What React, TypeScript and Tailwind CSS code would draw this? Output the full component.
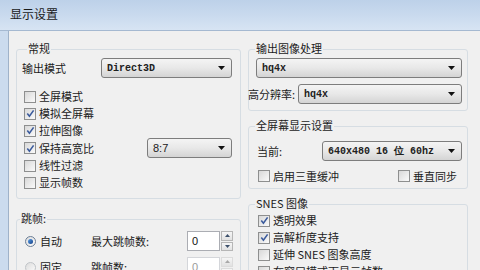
import React from "react";

const cjk = "font-['Noto_Sans_CJK_SC','Noto_Sans',sans-serif]";
const mono = "font-['Liberation_Mono','DejaVu_Sans_Mono',monospace]";

function Box({ checked, disabled }: { checked?: boolean; disabled?: boolean }) {
  return (
    <span
      className={`w-[12px] h-[12px] shrink-0 border ${
        disabled ? "border-[#c4c4c4]" : "border-[#8e8f8f]"
      } bg-gradient-to-br from-[#d8d8d8] to-[#fafafa] flex items-center justify-center`}
    >
      {checked && (
        <svg width="9" height="9" viewBox="0 0 9 9">
          <path d="M1.3 4.6 L3.4 7.2 L7.6 1.4" stroke="#3b5b9c" strokeWidth="1.6" fill="none" />
        </svg>
      )}
    </span>
  );
}

function Check({ checked, label, className = "" }: { checked?: boolean; label: string; className?: string }) {
  return (
    <div className={`flex items-center gap-[3px] ${className}`}>
      <Box checked={checked} />
      <span className="text-[11px] leading-[13px] text-[#1b1b1b] whitespace-nowrap">{label}</span>
    </div>
  );
}

function Radio({ checked, label }: { checked?: boolean; label: string }) {
  return (
    <div className="flex items-center gap-[4px]">
      <span
        className={`w-[11px] h-[11px] rounded-full border ${
          checked ? "border-[#6b7e96]" : "border-[#c0c4c8]"
        } bg-gradient-to-br from-[#dcdcdc] to-[#fbfbfb] flex items-center justify-center shrink-0`}
      >
        {checked && <span className="w-[5px] h-[5px] rounded-full bg-gradient-to-br from-[#5aa0e8] to-[#163f86]" />}
      </span>
      <span className="text-[11px] leading-[13px] text-[#1b1b1b]">{label}</span>
    </div>
  );
}

function Drop({ text, className = "", sans }: { text: string; className?: string; sans?: boolean }) {
  return (
    <div
      className={`h-[20px] shrink-0 border border-[#7d7d7d] rounded-[3px] bg-gradient-to-b from-[#f4f4f4] via-[#e8e8e8] to-[#d4d4d4] flex items-center pl-[5px] pr-[6px] ${className}`}
    >
      <span
        className={`flex-1 whitespace-nowrap text-[#202020] ${
          sans ? "font-['Liberation_Sans',sans-serif] text-[11px]" : `${mono} font-bold text-[10px]`
        }`}
      >
        {text}
      </span>
      <svg width="7" height="4" viewBox="0 0 7 4">
        <path d="M0 0H7L3.5 4Z" fill="#111" />
      </svg>
    </div>
  );
}

function Group({
  label,
  className = "",
  children,
  labelLeft = "left-[8px]",
}: {
  label: string;
  className?: string;
  children?: React.ReactNode;
  labelLeft?: string;
}) {
  return (
    <div className={`relative shrink-0 border border-[#d6dde3] rounded-[3px] ${className}`}>
      <span
        className={`absolute -top-[8px] ${labelLeft} bg-[#f0f0f0] px-[1px] text-[11px] leading-[13px] text-[#1b1b1b] whitespace-nowrap`}
      >
        {label}
      </span>
      {children}
    </div>
  );
}

function Spin({ value, disabled }: { value: string; disabled?: boolean }) {
  return (
    <div className="flex items-stretch h-[20px] gap-[1px]">
      <div
        className={`w-[33px] border ${
          disabled ? "border-[#d4d6da] text-[#9a9a9a]" : "border-[#abadb3] text-[#111]"
        } bg-white flex items-center pl-[4px] font-['Liberation_Sans',sans-serif] text-[11px]`}
      >
        {value}
      </div>
      <div className="w-[12px] flex flex-col gap-[1px]">
        {[0, 1].map((i) => (
          <div
            key={i}
            className={`flex-1 border ${
              disabled ? "border-[#dcdcdc]" : "border-[#b6b6b6]"
            } bg-gradient-to-b from-[#f6f6f6] to-[#e2e2e2] flex items-center justify-center`}
          >
            <svg width="5" height="3" viewBox="0 0 5 3">
              <path d={i === 0 ? "M0 3H5L2.5 0Z" : "M0 0H5L2.5 3Z"} fill={disabled ? "#a8a8a8" : "#3c4f6a"} />
            </svg>
          </div>
        ))}
      </div>
    </div>
  );
}

export default function App() {
  return (
    <div className={`w-[480px] h-[270px] overflow-hidden flex flex-col ${cjk}`}>
      <div className="h-[31px] shrink-0 bg-gradient-to-b from-[#bdd1e9] via-[#c9daee] to-[#d7e4f3] flex items-center pl-[10px] pb-[2px] border-b border-[#a5b9d1]">
        <span className="text-[12px] text-[#1a1a1a]">显示设置</span>
      </div>
      <div className="flex-1 min-h-0 flex bg-[#cbdbee] pl-[8px]">
        <div className="flex-1 flex bg-[#f0f0f0] border-l border-[#9fb2c9]">
          {/* left column */}
          <div className="w-[232px] shrink-0 flex flex-col pl-[7px] pt-[18px]">
            <Group label="常规" className="h-[150px] w-[225px] flex flex-col" labelLeft="left-[10px]">
              <div className="flex items-center justify-between h-[20px] mt-[8px] pl-[5px] pr-[8px]">
                <span className="text-[11px] leading-[13px] text-[#1b1b1b]">输出模式</span>
                <Drop text="Direct3D" className="w-[131px]" />
              </div>
              <div className="flex flex-col mt-[10px] pl-[7px] pr-[8px]">
                <Check label="全屏模式" className="h-[17px]" />
                <Check checked label="模拟全屏幕" className="h-[17px]" />
                <Check checked label="拉伸图像" className="h-[17px]" />
                <div className="h-[18px] flex items-center justify-between">
                  <Check checked label="保持高宽比" />
                  <Drop text="8:7" sans className="w-[85px]" />
                </div>
                <Check label="线性过滤" className="h-[17px]" />
                <Check label="显示帧数" className="h-[17px]" />
              </div>
            </Group>
            <Group label="跳帧:" className="mt-[20px] h-[120px] w-[225px] flex flex-col gap-[6px] pt-[11px] pl-[8px]" labelLeft="left-[3px]">
              <div className="flex items-center h-[20px]">
                <div className="w-[66px]">
                  <Radio checked label="自动" />
                </div>
                <span className="w-[96px] text-[11px] leading-[13px] text-[#1b1b1b]">最大跳帧数:</span>
                <Spin value="0" />
              </div>
              <div className="flex items-center h-[20px]">
                <div className="w-[66px]">
                  <Radio label="固定" />
                </div>
                <span className="w-[96px] text-[11px] leading-[13px] text-[#1b1b1b]">跳帧数:</span>
                <Spin value="0" disabled />
              </div>
            </Group>
          </div>
          {/* right column */}
          <div className="flex-1 flex flex-col pl-[7px] pr-[12px] pt-[18px]">
            <Group label="输出图像处理" className="w-[220px] flex flex-col pt-[8px] pb-[6px] gap-[6px]" labelLeft="left-[6px]">
              <div className="flex justify-end pr-[5px]">
                <Drop text="hq4x" className="w-[206px]" />
              </div>
              <div className="flex items-center justify-between pr-[5px]">
                <span className="text-[11px] leading-[13px] text-[#1b1b1b] -ml-[1px]">高分辨率:</span>
                <Drop text="hq4x" className="w-[164px]" />
              </div>
            </Group>
            <Group label="全屏幕显示设置" className="mt-[15px] w-[220px] flex flex-col pt-[14px] pb-[5px]" labelLeft="left-[6px]">
              <div className="flex items-center justify-between h-[20px] pl-[8px] pr-[5px]">
                <span className="text-[11px] leading-[13px] text-[#1b1b1b]">当前:</span>
                <Drop text="640x480 16 位 60hz" className="w-[140px]" />
              </div>
              <div className="flex items-center justify-between h-[14px] mt-[8px] pl-[9px] pr-[10px]">
                <Check label="启用三重缓冲" />
                <Check label="垂直同步" />
              </div>
            </Group>
            <Group label="SNES 图像" className="mt-[15px] w-[220px] h-[100px] flex flex-col pt-[7px] pl-[9px]" labelLeft="left-[6px]">
              <Check checked label="透明效果" className="h-[17px]" />
              <Check checked label="高解析度支持" className="h-[17px]" />
              <Check label="延伸 SNES 图象高度" className="h-[17px]" />
              <Check label="在窗口模式下显示帧数" className="h-[17px]" />
            </Group>
          </div>
        </div>
      </div>
    </div>
  );
}
